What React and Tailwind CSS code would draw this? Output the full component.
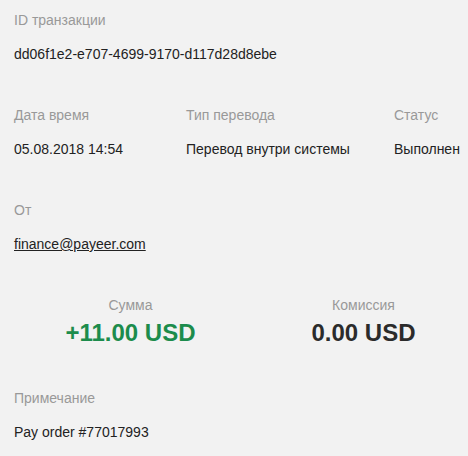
import React from "react";

const tx = {
  id: "dd06f1e2-e707-4699-9170-d117d28d8ebe",
  date: "05.08.2018 14:54",
  type: "Перевод внутри системы",
  status: "Выполнен",
  from: "finance@payeer.com",
  amount: "+11.00 USD",
  fee: "0.00 USD",
  note: "Pay order #77017993",
};

function Field({ label, children, className = "" }) {
  return (
    <div className={className}>
      <div className="text-[#999] leading-[20px]">{label}</div>
      <div className="mt-[14px] text-[#222] leading-[20px] whitespace-nowrap">{children}</div>
    </div>
  );
}

export default function App() {
  return (
    <div
      className="w-[468px] h-[456px] overflow-hidden bg-[#f2f2f2] pl-[14px] pt-[10px] text-[14px] flex flex-col gap-[41px]"
      style={{ fontFamily: '"Liberation Sans", Arial, sans-serif' }}
    >
      <Field label="ID транзакции">{tx.id}</Field>

      <div className="flex">
        <Field label="Дата время" className="w-[172px] shrink-0">{tx.date}</Field>
        <Field label="Тип перевода" className="w-[208px] shrink-0">{tx.type}</Field>
        <Field label="Статус" className="shrink-0">{tx.status}</Field>
      </div>

      <Field label="От">
        <a href="#" className="underline">{tx.from}</a>
      </Field>

      {/* Amount / fee */}
      <div className="flex">
        <div className="w-[233px] shrink-0 text-center">
          <div className="text-[#999] leading-[20px]">Сумма</div>
          <div className="mt-[4px] text-[24px] leading-[28px] font-bold text-[#1c8c4c] whitespace-nowrap">
            {tx.amount}
          </div>
        </div>
        <div className="w-[233px] shrink-0 text-center">
          <div className="text-[#999] leading-[20px]">Комиссия</div>
          <div className="mt-[4px] text-[24px] leading-[28px] font-bold text-[#2b2b2b] whitespace-nowrap">
            {tx.fee}
          </div>
        </div>
      </div>

      <Field label="Примечание">{tx.note}</Field>
    </div>
  );
}
